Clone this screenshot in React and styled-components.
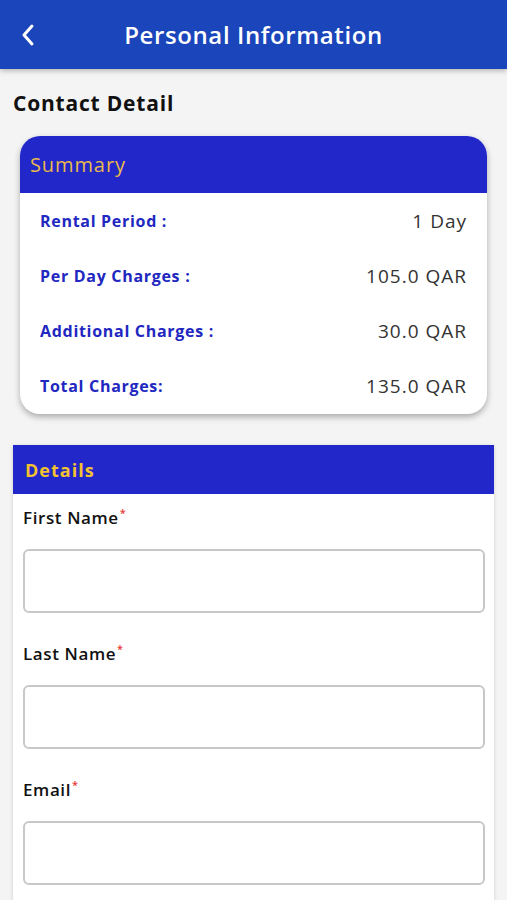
import React from "react";
import styled, { createGlobalStyle } from "styled-components";

const Global = createGlobalStyle`
  html, body { margin: 0; padding: 0; background: #f4f4f4; }
  body { font-family: "Open Sans", "Noto Sans", sans-serif; }
  * { box-sizing: border-box; }
`;

const Page = styled.div`
  width: 507px;
  min-height: 900px;
  background: #f4f4f4;
  overflow: hidden;
`;

const TopBar = styled.header`
  height: 69px;
  background: #1b45bb;
  display: flex;
  align-items: center;
  position: relative;
  box-shadow: 0 2px 5px rgba(0, 0, 0, 0.25);
`;

const BackButton = styled.button`
  background: none;
  border: none;
  padding: 0;
  margin-left: 18px;
  width: 20px;
  height: 24px;
  display: flex;
  align-items: center;
  justify-content: center;
  cursor: pointer;
`;

const Title = styled.h1`
  flex: 1;
  margin: 0 38px 0 0;
  text-align: center;
  color: #fff;
  font-size: 24px;
  font-weight: 600;
  letter-spacing: 0.6px;
`;

const Content = styled.main`
  padding: 20px 13px 0 13px;
`;

const SectionTitle = styled.h2`
  margin: 0 0 19px 0;
  font-size: 21px;
  font-weight: 700;
  color: #111;
  line-height: 28px;
  letter-spacing: 0.8px;
`;

const SummaryCard = styled.section`
  margin: 0 7px;
  background: #fff;
  border-radius: 20px;
  overflow: hidden;
  box-shadow: 0 3px 6px rgba(0, 0, 0, 0.3);
`;

const CardHeader = styled.div`
  background: #2127c8;
  height: ${(p) => p.$h}px;
  display: flex;
  align-items: center;
  padding-left: ${(p) => p.$pl}px;
  color: ${(p) => p.$color};
  font-size: ${(p) => p.$fs}px;
  font-weight: ${(p) => p.$fw};
  letter-spacing: ${(p) => p.$ls}px;
`;

const SummaryBody = styled.div`
  padding: 0 20px;
  display: flex;
  flex-direction: column;
`;

const SummaryRow = styled.div`
  height: 55px;
  display: flex;
  align-items: center;
  justify-content: space-between;
  &:last-child { height: 56px; }
`;

const RowLabel = styled.span`
  color: #2127c0;
  font-size: 16px;
  font-weight: 700;
  letter-spacing: 0.7px;
`;

const RowValue = styled.span`
  color: #333;
  font-size: 19px;
  font-weight: 400;
  letter-spacing: 1px;
`;

const DetailsCard = styled.section`
  margin-top: 31px;
  background: #fff;
  box-shadow: 0 1px 4px rgba(0, 0, 0, 0.15);
`;

const DetailsBody = styled.div`
  padding: 13px 9px 20px 10px;
  display: flex;
  flex-direction: column;
`;

const Field = styled.div`
  display: flex;
  flex-direction: column;
  margin-bottom: 30px;
`;

const Label = styled.label`
  font-size: 17px;
  font-weight: 600;
  color: #111;
  line-height: 22px;
  height: 22px;
  margin-bottom: 20px;
  letter-spacing: 0.6px;
`;

const Req = styled.span`
  color: #e53935;
  font-size: 11px;
  line-height: 0;
  position: relative;
  top: -7px;
  margin-left: 1px;
`;

const Input = styled.input`
  height: 64px;
  border: 2px solid #c8c8c8;
  border-radius: 6px;
  background: #fff;
  font-size: 16px;
  padding: 0 12px;
  outline: none;
`;

const rows = [
  ["Rental Period :", "1 Day"],
  ["Per Day Charges :", "105.0 QAR"],
  ["Additional Charges :", "30.0 QAR"],
  ["Total Charges:", "135.0 QAR"],
];

export default function App() {
  return (
    <Page>
      <Global />
      <TopBar>
        <BackButton aria-label="Back">
          <svg width="16" height="24" viewBox="0 0 16 24">
            <path d="M12 3 L4 12 L12 21" fill="none" stroke="#fff" strokeWidth="3" strokeLinecap="round" strokeLinejoin="round" />
          </svg>
        </BackButton>
        <Title>Personal Information</Title>
      </TopBar>
      <Content>
        <SectionTitle>Contact Detail</SectionTitle>
        <SummaryCard>
          <CardHeader $h={57} $pl={10} $color="#e9b94e" $fs={20} $fw={500} $ls={0.9}>Summary</CardHeader>
          <SummaryBody>
            {rows.map(([l, v]) => (
              <SummaryRow key={l}>
                <RowLabel>{l}</RowLabel>
                <RowValue>{v}</RowValue>
              </SummaryRow>
            ))}
          </SummaryBody>
        </SummaryCard>
        <DetailsCard>
          <CardHeader $h={49} $pl={12} $color="#f3c230" $fs={18} $fw={700} $ls={1}>Details</CardHeader>
          <DetailsBody>
            {["First Name", "Last Name", "Email"].map((n) => (
              <Field key={n}>
                <Label>{n}<Req>*</Req></Label>
                <Input type="text" />
              </Field>
            ))}
          </DetailsBody>
        </DetailsCard>
      </Content>
    </Page>
  );
}
